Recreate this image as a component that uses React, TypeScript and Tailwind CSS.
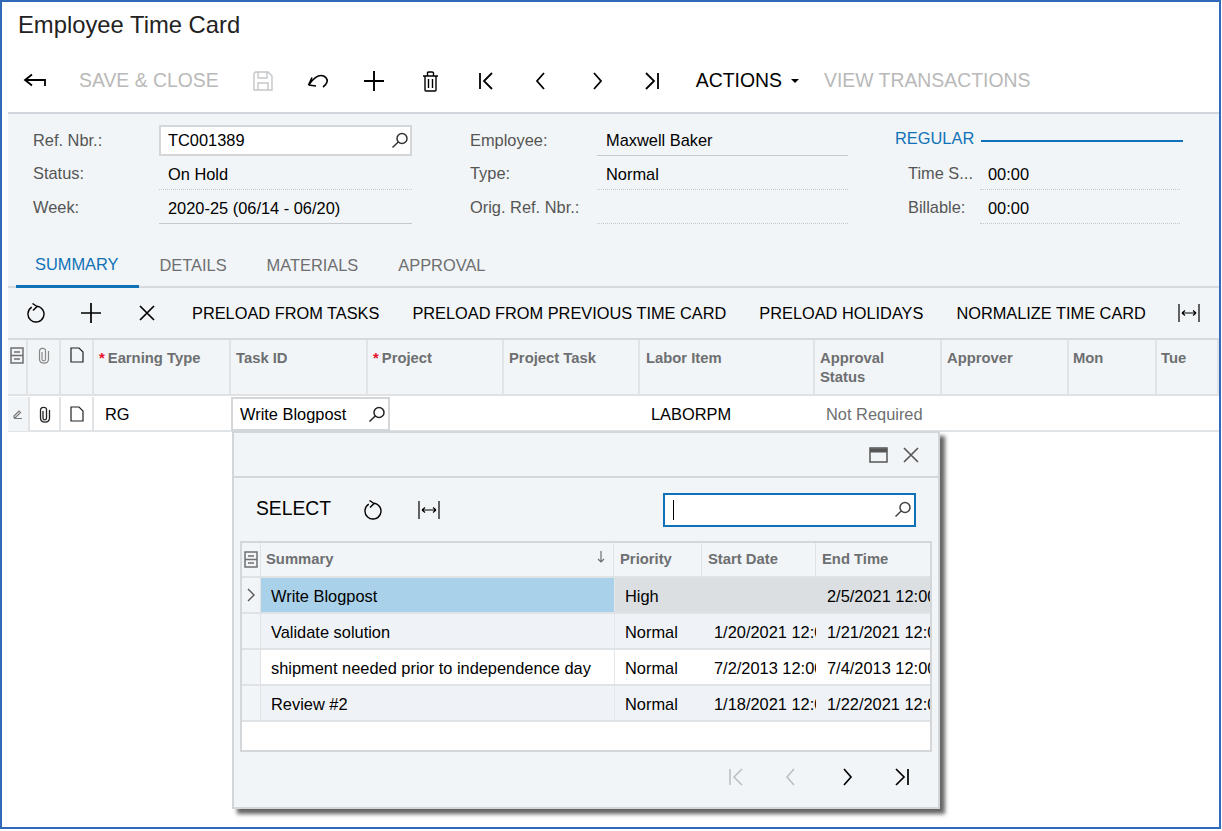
import React from 'react'

type IconProps = { className?: string; d: string; w?: number; h?: number; sw?: number }

function Icon({ className = '', d, w = 24, h = 24, sw = 1.6 }: IconProps) {
  return (
    <svg width={w} height={h} viewBox={`0 0 ${w} ${h}`} fill="none" stroke="currentColor" strokeWidth={sw} className={`shrink-0 ${className}`}>
      <path d={d} />
    </svg>
  )
}

const BACK = 'M2 7H22V13M9 1.5L2 7L9 12.5'
const SAVE = 'M2.5 1H15L19 5V19H1V2.5ZM5 1V7H14V1M5 19V12H15V19'
const UNDO = 'M1.5 12L9 13M1.5 12L5 4.5M2 11.5C6 6 10 2.5 14 2.5C18 2.5 21 6 20 9C19.5 11 18 12.5 16 14'
const PLUS = 'M10 0V20M0 10H20'
const TRASH = 'M1 5H16M5.5 5V2C5.5 1 6 1 7 1H10C11 1 11.5 1 11.5 2V5M3 5V19C3 20 3.5 20 4 20H13C13.5 20 14 20 14 19V5M6.5 8V17M10.5 8V17'
const FIRST = 'M2 2V18M14 2L6 10L14 18'
const PREV = 'M9 2L2 10L9 18'
const NEXT = 'M2 2L9 10L2 18'
const LAST = 'M2 2L10 10L2 18M14 2V18'
const REFRESH = 'M4.8 4.2A8 8 0 1 0 10 3.1M5.5 0.5L10 3.5L6 7.5'
const CLOSE = 'M1 1L15 15M15 1L1 15'
const FIT = 'M1 1V19M21 1V19M4 10H18M4 10L7 7.5M4 10L7 12.5M18 10L15 7.5M18 10L15 12.5'
const SEARCH = 'M1.5 15.5L7.5 9.8M6 6.5A5 5 0 1 0 16 6.5A5 5 0 1 0 6 6.5'
const CLIP = 'M5 5V12C5 14.5 8.5 14.5 8.5 12V3.5C8.5 0.5 2.5 0.5 2.5 4V12C2.5 17.5 11.5 17.5 11.5 12V4'
const NOTE = 'M1 1H9L13 5V15H1Z'
const FILES = 'M1 1H13V16H1ZM1 8.5H13M4 5H10M4 12H10'
const PENCIL = 'M1 7L6 2L7.5 3.5L2.5 8.5H1ZM1 9.5H9'

function SearchIcon({ className = 'text-[#333]' }: { className?: string }) {
  return <Icon d={SEARCH} w={17} h={17} sw={1.5} className={className} />
}

function Field({ label, value, labelW, valueW, line = 'dotted', pad = 'pl-[9px]' }: { label: string; value?: string; labelW: string; valueW: string; line?: 'dotted' | 'solid'; pad?: string }) {
  return (
    <div className="flex h-[34px] items-center">
      <div className={`${labelW} text-[16.4px] whitespace-nowrap text-[#555]`}>{label}</div>
      <div className={`${valueW} ${pad} flex h-[30px] items-center text-[16.4px] text-black ${line === 'solid' ? 'border-b border-[#c4c9cc]' : 'border-b border-dotted border-[#c4c9cc]'}`}>
        {value}
      </div>
    </div>
  )
}

const gridCols = 'grid-cols-[20px_33px_33px_137px_137px_136px_136px_175px_127px_127px_88px_1fr]'
const popCols = 'grid-cols-[19px_353px_88px_114px_1fr]'

function HeadCell({ children, req, className = 'pl-[5px]' }: { children?: React.ReactNode; req?: boolean; className?: string }) {
  return (
    <div className={`border-r-2 border-[#e0e4e7] pt-[9px] text-[14.8px] leading-[19px] font-bold text-[#6d6f71] ${className}`}>
      {req && <span className="mr-[3px] text-[#e8112d]">*</span>}
      {children}
    </div>
  )
}

function PopRow({ cells, odd, selected }: { cells: string[]; odd: boolean; selected?: boolean }) {
  const bg = odd ? 'bg-[#eff3f7]' : 'bg-white'
  return (
    <div className={`grid h-[36px] ${popCols} border-b-2 border-[#dfe3e6] text-[16.4px] text-black ${selected ? 'bg-[#dcdfe2]' : bg}`}>
      <div className="flex items-center justify-center border-r border-[#dfe3e6] bg-[#f2f5f7] text-[#555]">
        {selected && <Icon d="M1 1L7 7L1 13" w={8} h={14} sw={1.4} />}
      </div>
      <div className={`flex items-center pt-[2px] pl-[10px] whitespace-nowrap ${selected ? 'bg-[#a9d1ea]' : ''}`}>{cells[0]}</div>
      <div className="flex items-center border-l border-[#e5e8ea] pt-[2px] pl-[10px]">{cells[1]}</div>
      <div className="flex items-center overflow-hidden pt-[2px] pl-[12px] whitespace-nowrap">{cells[2]}</div>
      <div className="flex items-center overflow-hidden pt-[2px] pl-[11px] whitespace-nowrap">{cells[3]}</div>
    </div>
  )
}

function Popup() {
  return (
    <div className="absolute top-[431px] left-[232px] z-10 h-[378px] w-[708px] border-2 border-[#d3d6d9] bg-[#f2f5f7] shadow-[5px_5px_4px_rgba(50,50,50,0.75)]">
      <div className="flex h-[45px] items-center justify-end gap-[15px] border-b-2 border-[#d3d7da] pr-[19px] text-[#555]">
        <svg width="19" height="16" viewBox="0 0 19 16" fill="none" stroke="currentColor" strokeWidth="1.5">
          <path d="M1 1H18V15H1Z" />
          <path d="M1 3.5H18" strokeWidth="4" />
        </svg>
        <Icon d={CLOSE} w={16} h={16} sw={1.6} />
      </div>
      <div className="flex h-[63px] items-center pl-[22px] text-black">
        <span className="mr-[33px] text-[19.3px]">SELECT</span>
        <Icon d={REFRESH} w={18} h={20} sw={1.4} className="mr-[36px]" />
        <Icon d={FIT} w={22} h={20} sw={1.2} />
        <div className="mr-[22px] ml-auto flex h-[34px] w-[253px] items-center justify-between border-2 border-[#0f72b8] bg-white pr-[3px] pl-[8px]">
          <span className="h-[20px] w-px bg-black" />
          <SearchIcon className="text-[#444]" />
        </div>
      </div>
      <div className="mx-[6px] h-[211px] w-[692px] border-2 border-[#d3d7da] bg-white">
        <div className={`grid h-[35px] ${popCols} border-b-2 border-[#dfe3e6] bg-[#f2f5f7] text-[14.8px] font-bold text-[#6d6f71]`}>
          <div className="flex items-center justify-center border-r border-[#dfe3e6]">
            <Icon d={FILES} w={14} h={17} sw={1.5} />
          </div>
          <div className="flex items-center justify-between border-r border-[#dfe3e6] pr-[8px] pl-[5px]">
            Summary
            <Icon d="M4 0V11M1 8L4 11L7 8" w={8} h={12} sw={1.2} className="-mt-[5px]" />
          </div>
          <div className="flex items-center border-r border-[#dfe3e6] pl-[6px]">Priority</div>
          <div className="flex items-center border-r border-[#dfe3e6] pl-[6px]">Start Date</div>
          <div className="flex items-center pl-[6px]">End Time</div>
        </div>
        <PopRow selected odd cells={['Write Blogpost', 'High', '', '2/5/2021 12:00']} />
        <PopRow odd cells={['Validate solution', 'Normal', '1/20/2021 12:00', '1/21/2021 12:00']} />
        <PopRow odd={false} cells={['shipment needed prior to independence day', 'Normal', '7/2/2013 12:00', '7/4/2013 12:00']} />
        <PopRow odd cells={['Review #2', 'Normal', '1/18/2021 12:00', '1/22/2021 12:00']} />
      </div>
      <div className="flex h-[50px] items-center justify-end pr-[28px]">
        <Icon d={FIRST} w={16} h={20} sw={1.5} className="mr-[41px] text-[#b9bdc0]" />
        <Icon d={PREV} w={11} h={20} sw={1.5} className="mr-[46px] text-[#b9bdc0]" />
        <Icon d={NEXT} w={11} h={20} sw={1.7} className="mr-[41px] text-black" />
        <Icon d={LAST} w={16} h={20} sw={1.7} className="text-black" />
      </div>
    </div>
  )
}

export default function App() {
  return (
    <div className="relative h-[831px] w-[1222px] bg-white font-['Liberation_Sans',Arial,sans-serif]">
      <div className="h-[829px] w-[1221px] overflow-hidden border-2 border-[#2f69b8]">
        <div className="flex h-[46px] items-center pl-[16px] text-[23.8px] text-[#222]">Employee Time Card</div>

        <div className="flex h-[64px] items-center pt-[2px] pl-[21px] text-[19.4px] whitespace-nowrap">
          <Icon d={BACK} w={24} h={16} sw={1.8} className="mr-[32px] text-black" />
          <span className="mr-[34px] text-[#b9b9b9]">SAVE &amp; CLOSE</span>
          <Icon d={SAVE} w={20} h={20} sw={1.4} className="mr-[34px] text-[#c3c6c8]" />
          <Icon d={UNDO} w={22} h={16} sw={1.6} className="mr-[35px] text-black" />
          <Icon d={PLUS} w={20} h={20} sw={1.9} className="mr-[38px] text-black" />
          <Icon d={TRASH} w={17} h={21} sw={1.4} className="mr-[39px] text-black" />
          <Icon d={FIRST} w={16} h={20} sw={1.8} className="mr-[41px] text-black" />
          <Icon d={PREV} w={11} h={20} sw={1.8} className="mr-[46px] text-black" />
          <Icon d={NEXT} w={11} h={20} sw={1.8} className="mr-[41px] text-black" />
          <Icon d={LAST} w={16} h={20} sw={1.8} className="mr-[36px] text-black" />
          <span className="mr-[9px] text-black">ACTIONS</span>
          <span className="mr-[25px] h-0 w-0 border-x-[4.5px] border-t-[4.5px] border-x-transparent border-t-black" />
          <span className="text-[#b9b9b9]">VIEW TRANSACTIONS</span>
        </div>

        <div className="ml-[6px] h-[176px] border-t-2 border-[#d0d6dc] bg-[#f2f5f7]">
          <div className="flex pt-[10px] pl-[25px]">
            <div className="w-[437px]">
              <div className="flex h-[34px] items-center">
                <div className="-mt-[2px] w-[126px] text-[16.4px] text-[#555]">Ref. Nbr.:</div>
                <div className="-mt-[1px] flex h-[31px] w-[253px] items-center justify-between border-2 border-[#d4d7da] bg-white pr-[2px] pl-[7px] text-[16.4px] text-black">
                  TC001389
                  <SearchIcon />
                </div>
              </div>
              <Field label="Status:" value="On Hold" labelW="-mt-[3px] w-[126px]" valueW="w-[253px]" />
              <Field label="Week:" value="2020-25 (06/14 - 06/20)" labelW="-mt-[3px] w-[126px]" valueW="w-[253px]" line="solid" />
            </div>
            <div className="w-[425px]">
              <Field label="Employee:" value="Maxwell Baker" labelW="-mt-[2px] w-[127px]" valueW="w-[251px]" line="solid" />
              <Field label="Type:" value="Normal" labelW="-mt-[3px] w-[127px]" valueW="w-[251px]" />
              <Field label="Orig. Ref. Nbr.:" labelW="-mt-[3px] w-[127px]" valueW="w-[251px]" />
            </div>
            <div>
              <div className="flex h-[34px] items-center">
                <span className="-mt-[6px] w-[86px] text-[16.4px] text-[#0f72b8]">REGULAR</span>
                <span className="h-[2px] w-[202px] bg-[#0f72b8]" />
              </div>
              <div className="pl-[13px]">
                <Field label="Time S..." value="00:00" labelW="-mt-[3px] w-[72px]" valueW="w-[200px]" pad="pl-[8px]" />
                <Field label="Billable:" value="00:00" labelW="-mt-[3px] w-[72px]" valueW="w-[200px]" pad="pl-[8px]" />
              </div>
            </div>
          </div>
          <div className="mt-[19px] flex h-[43px] border-b-2 border-[#d6dadd] pl-[8px] text-[16.4px] text-[#6d6f71]">
            <div className="h-[43px] border-b-[3px] border-[#0f72b8] pt-[7px] pr-[21px] pl-[19px] text-[#0f72b8]">SUMMARY</div>
            <div className="px-[20px] pt-[8px]">DETAILS</div>
            <div className="px-[20px] pt-[8px]">MATERIALS</div>
            <div className="px-[20px] pt-[8px]">APPROVAL</div>
          </div>
        </div>

        <div className="ml-[6px] flex h-[52px] items-center border-b-2 border-[#d6dadd] bg-[#f2f5f7] pl-[19px] text-[16.35px] whitespace-nowrap text-black">
          <Icon d={REFRESH} w={18} h={20} sw={1.4} className="mr-[36px]" />
          <Icon d={PLUS} w={20} h={20} sw={1.7} className="mr-[38px]" />
          <Icon d={CLOSE} w={16} h={16} sw={1.7} className="mr-[37px]" />
          <span className="mr-[33px]">PRELOAD FROM TASKS</span>
          <span className="mr-[33px]">PRELOAD FROM PREVIOUS TIME CARD</span>
          <span className="mr-[33px]">PRELOAD HOLIDAYS</span>
          <span className="mr-[32px]">NORMALIZE TIME CARD</span>
          <Icon d={FIT} w={22} h={20} sw={1.2} />
        </div>

        <div className={`ml-[6px] grid h-[56px] ${gridCols} border-b-2 border-[#dfe3e6] bg-[#f2f5f7]`}>
          <div className="flex justify-center border-r-2 border-[#e0e4e7] pt-[7px] text-[#6d6f71]">
            <Icon d={FILES} w={14} h={17} sw={1.5} />
          </div>
          <div className="flex justify-center border-r-2 border-[#e0e4e7] pt-[7px] text-[#888]">
            <Icon d={CLIP} w={14} h={17} sw={1.2} />
          </div>
          <div className="flex justify-center border-r-2 border-[#e0e4e7] pt-[7px] text-[#222]">
            <Icon d={NOTE} w={14} h={16} sw={1.2} />
          </div>
          <HeadCell req>Earning Type</HeadCell>
          <HeadCell>Task ID</HeadCell>
          <HeadCell req>Project</HeadCell>
          <HeadCell>Project Task</HeadCell>
          <HeadCell className="pl-[6px]">Labor Item</HeadCell>
          <HeadCell>
            Approval
            <br />
            Status
          </HeadCell>
          <HeadCell>Approver</HeadCell>
          <HeadCell className="pl-[4px]">Mon</HeadCell>
          <HeadCell className="border-r-0 pl-[4px]">Tue</HeadCell>
        </div>

        <div className={`ml-[6px] grid h-[36px] ${gridCols} border-b-2 border-[#e0e4e7] bg-white pt-[1px] text-[16.4px] text-black`}>
          <div className="flex items-center justify-center bg-[#f2f5f7] text-[#777]">
            <Icon d={PENCIL} w={10} h={11} sw={1.2} />
          </div>
          <div className="flex items-center justify-center border-x-2 border-[#e0e4e7] text-[#222]">
            <Icon d={CLIP} w={14} h={17} sw={1.3} />
          </div>
          <div className="flex items-center justify-center border-r-2 border-[#e0e4e7] text-[#222]">
            <Icon d={NOTE} w={14} h={16} sw={1.2} />
          </div>
          <div className="flex items-center pt-[1px] pl-[11px]">RG</div>
          <div className="z-[1] flex h-[34px] w-[159px] items-center justify-between border-2 border-[#d4d7da] bg-white pr-[3px] pl-[7px]">
            Write Blogpost
            <SearchIcon className="text-[#222]" />
          </div>
          <div />
          <div />
          <div className="col-start-8 flex items-center pt-[1px] pl-[11px]">LABORPM</div>
          <div className="flex items-center pt-[1px] pl-[11px] text-[#6d6f71]">Not Required</div>
        </div>
      </div>
      <Popup />
    </div>
  )
}
